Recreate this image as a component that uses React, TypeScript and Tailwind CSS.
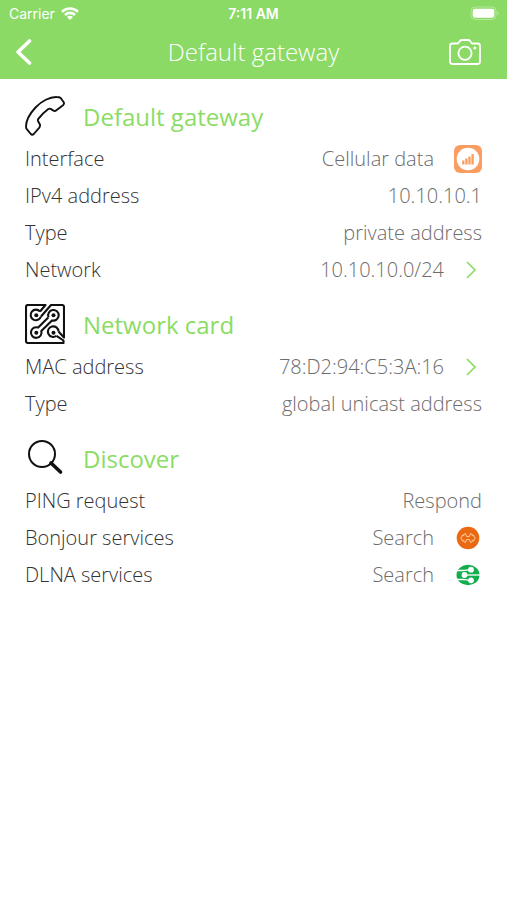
import type { ReactNode } from "react";

function WifiIcon() {
  return (
    <svg width="18" height="13" viewBox="0 0 18 13" fill="none" stroke="#fff" strokeWidth="2.6" aria-hidden="true">
      <path d="M1 4.800C5.500.3 12.500.3 17 4.800" />
      <path d="M4 8C6.800 5.200 11.200 5.200 14 8" />
      <path d="M9 13 6 10C7.800 8.400 10.200 8.400 12 10Z" fill="#fff" stroke="none" />
    </svg>
  );
}

function BatteryIcon() {
  return (
    <svg width="30" height="15" viewBox="0 0 30 15" fill="none" aria-hidden="true">
      <rect x="1" y="1" width="25" height="12.500" rx="4" stroke="#fff" strokeOpacity=".35" />
      <rect x="2.700" y="2.700" width="21.600" height="9.100" rx="2.200" fill="#fff" />
      <path d="M27.500 5.500v3.600c1.300-.6 1.300-3 0-3.600Z" fill="#fff" fillOpacity=".6" />
    </svg>
  );
}

function BackIcon() {
  return (
    <svg width="18" height="28" viewBox="0 0 18 28" fill="none" stroke="#fff" strokeWidth="3.600" strokeLinecap="round" strokeLinejoin="round" aria-hidden="true">
      <path d="M15.500 3 4 14 15.500 25" />
    </svg>
  );
}

function CameraIcon() {
  return (
    <svg width="32" height="26" viewBox="0 0 32 26" fill="none" stroke="#fff" strokeWidth="1.800" strokeLinejoin="round" aria-hidden="true">
      <path d="M3.500 4.500H8.500C10 4.500 10.500 1 12.500 1H19.500C21.500 1 22 4.500 23.500 4.500H28.500Q31 4.500 31 7V22.500Q31 25 28.500 25H3.500Q1 25 1 22.500V7Q1 4.500 3.500 4.500Z" />
      <circle cx="16" cy="14.200" r="6.600" />
      <circle cx="25.800" cy="9" r="1.500" fill="#fff" stroke="none" />
    </svg>
  );
}

function PhoneIcon() {
  return (
    <svg width="40" height="40" viewBox="0 0 40 40" fill="none" stroke="#111" strokeWidth="1.900" strokeLinejoin="round" aria-hidden="true">
      <path d="M31.500 1C25 .8 16.500 5 10.500 11.500C4.500 18 1 25 1 30.500Q1 32 1.800 33.200L5.800 38Q7.200 39.500 8.800 38L14.300 31.600Q15.500 30 14.800 28.300L13 25Q12.600 23.800 13.500 22.600C16 19.400 19.500 15.800 23 13.200Q24.300 12.300 25.600 12.900L28.500 14.600Q30 15.400 31.400 14.300L38 9.300Q39.600 7.800 38.700 6.200L35.700 2Q34.600 1 31.500 1Z" />
    </svg>
  );
}

function CircuitIcon() {
  return (
    <svg width="40" height="40" viewBox="0 0 40 40" fill="none" stroke="#111" strokeWidth="2.100" strokeLinejoin="round" aria-hidden="true">
      <path d="M15 7.500 20.500 1H3Q1 1 1 3V37Q1 39 3 39H38.500V36.500L31.500 31.800" />
      <path d="M16 12.500 26 1H37Q39 1 39 3V33.500L33.500 27.500" />
      <path d="M15 7.500A5.300 5.300 0 1 0 16 12.500" />
      <path d="M23.500 13.300A5.300 5.300 0 1 1 27 16.400L16.300 26.900A5.300 5.300 0 1 1 13.200 23.600L23.500 13.300" />
      <path d="M31.500 31.800A5.300 5.300 0 1 1 33.500 27.500" />
      <g fill="#111" stroke="none">
        <circle cx="11.300" cy="11.300" r="2" />
        <circle cx="28.500" cy="11.300" r="2" />
        <circle cx="11.300" cy="28.700" r="2" />
        <circle cx="28.500" cy="28.700" r="2" />
      </g>
    </svg>
  );
}

function SearchIcon() {
  return (
    <svg width="40" height="40" viewBox="0 0 40 40" fill="none" stroke="#111" aria-hidden="true">
      <circle cx="17" cy="16" r="13" strokeWidth="2" />
      <path d="M26 25 35.500 34" strokeWidth="3.600" strokeLinecap="round" />
    </svg>
  );
}

function SignalIcon() {
  return (
    <svg width="28" height="28" viewBox="0 0 28 28" aria-hidden="true">
      <rect width="28" height="28" rx="6" fill="#fa9d60" />
      <circle cx="14" cy="14" r="11.300" fill="#fff" />
      <path d="M9.300 15.500V19.500M12.400 13.500V19.500M15.500 11.500V19.500M18.600 9V19.500" stroke="#fa9d60" strokeWidth="2.300" />
    </svg>
  );
}

function BonjourIcon() {
  return (
    <svg width="28" height="24" viewBox="0 0 28 24" fill="none" aria-hidden="true">
      <circle cx="14" cy="12" r="11.300" fill="#e96a12" />
      <g stroke="#ffc999" strokeWidth="1" strokeLinejoin="round">
        <path d="M12.600 10.500 11.500 7.500 9.800 8.200V9.700L8.200 9.200 7.800 11 6.500 12 7.800 13 8.200 14.800 9.800 14.300V15.800L11.500 16.500 12.600 13.500" />
        <path d="M15.400 10.500 16.500 7.500 18.200 8.200V9.700L19.800 9.200 20.200 11 21.500 12 20.200 13 19.800 14.800 18.200 14.300V15.800L16.500 16.500 15.400 13.500" />
        <path d="M12.600 10.500H15.400M12.600 13.500H15.400" />
      </g>
    </svg>
  );
}

function DlnaIcon() {
  return (
    <svg width="28" height="22" viewBox="0 0 28 22" fill="none" aria-hidden="true">
      <ellipse cx="14" cy="11" rx="11.500" ry="10.200" fill="#12ad4c" />
      <g stroke="#fff" strokeWidth="1.300">
        <path d="M2 6.500H9C12 6.500 13.500 5.500 17 5.500" />
        <path d="M10 11H26.500" />
        <path d="M2 15.500H9C12 15.500 13.500 16.500 17 16.500" />
      </g>
      <g fill="#fff">
        <circle cx="17" cy="5.700" r="2.900" />
        <circle cx="10.500" cy="11" r="2.900" />
        <circle cx="17" cy="16.300" r="2.900" />
      </g>
    </svg>
  );
}

function ChevronIcon() {
  return (
    <svg width="18" height="20" viewBox="0 0 18 20" fill="none" stroke="#8bdc65" strokeWidth="1.700" aria-hidden="true">
      <path d="M3 2 11 10 3 18" />
    </svg>
  );
}

type RowProps = { label: string; value: string; icon?: ReactNode; chevron?: boolean };

function Row({ label, value, icon, chevron }: RowProps) {
  const content = (
    <>
      <span className="text-[#333333]">{label}</span>
      <span className={`flex items-center text-[#6c6c6c] ${icon || chevron ? "gap-5" : ""}`}>
        {value}
        {icon}
        {chevron && <ChevronIcon />}
      </span>
    </>
  );
  const style = "flex h-[37px] w-full items-center justify-between text-[20px] font-light";
  return (
    <li>
      {icon || chevron ? (
        <button type="button" className={style}>{content}</button>
      ) : (
        <div className={style}>{content}</div>
      )}
    </li>
  );
}

function Section({ title, icon, children }: { title: string; icon: ReactNode; children: ReactNode }) {
  return (
    <section>
      <div className="flex h-12 items-center gap-[18px]">
        {icon}
        <h2 className="pt-[2px] text-[24px] text-[#8bdc65]">{title}</h2>
      </div>
      <ul>{children}</ul>
    </section>
  );
}

export default function App() {
  return (
    <div className="min-h-screen bg-white font-['Open_Sans','Noto_Sans',sans-serif]">
      <header className="h-[79px] bg-[#8bda66] text-white">
        <div className="grid h-[27px] grid-cols-3 items-center px-[9px] font-[Inter,sans-serif] text-[14px]">
          <div className="flex items-center gap-[6px]">
            Carrier
            <WifiIcon />
          </div>
          <time className="text-center font-semibold">7:11 AM</time>
          <div className="-mr-[2px] flex justify-end">
            <BatteryIcon />
          </div>
        </div>
        <div className="grid h-[50px] grid-cols-[1fr_auto_1fr] items-center">
          <button type="button" aria-label="Back" className="justify-self-start pl-[14px]">
            <BackIcon />
          </button>
          <h1 className="text-center text-[24px] font-light">Default gateway</h1>
          <button type="button" aria-label="Take screenshot" className="justify-self-end pr-[26px]">
            <CameraIcon />
          </button>
        </div>
      </header>

      <main className="flex flex-col gap-3 px-[25px] pt-[13px]">
        <Section title="Default gateway" icon={<PhoneIcon />}>
          <Row label="Interface" value="Cellular data" icon={<SignalIcon />} />
          <Row label="IPv4 address" value="10.10.10.1" />
          <Row label="Type" value="private address" />
          <Row label="Network" value="10.10.10.0/24" chevron />
        </Section>
        <Section title="Network card" icon={<CircuitIcon />}>
          <Row label="MAC address" value="78:D2:94:C5:3A:16" chevron />
          <Row label="Type" value="global unicast address" />
        </Section>
        <Section title="Discover" icon={<SearchIcon />}>
          <Row label="PING request" value="Respond" />
          <Row label="Bonjour services" value="Search" icon={<BonjourIcon />} />
          <Row label="DLNA services" value="Search" icon={<DlnaIcon />} />
        </Section>
      </main>
    </div>
  );
}
